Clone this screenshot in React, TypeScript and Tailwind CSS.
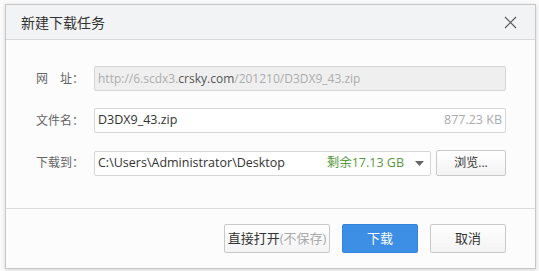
import React from 'react';

const font = { fontFamily: '"Segoe UI", "Open Sans", "Noto Sans CJK SC", sans-serif' };

const App: React.FC = () => {
  return (
    <div className="w-[539px] h-[271px] bg-[#fafafa] pt-[4px] pl-[5px]" style={font}>
      <div className="w-[531px] h-[265px] flex flex-col border border-[#c8c8c8] bg-[#fcfcfc] shadow-[0_1px_4px_rgba(0,0,0,0.15)]">
        {/* Header */}
        <div className="h-[35px] flex items-center justify-between pl-[15px] pr-[18px] bg-[#f2f3f5] border-b border-[#d9d9d9]">
          <span className="text-[14px] text-[#333]">新建下载任务</span>
          <svg width="13" height="13" viewBox="0 0 13 13" className="text-[#555]">
            <path d="M1 1 L12 12 M12 1 L1 12" stroke="currentColor" strokeWidth="1.1" fill="none" />
          </svg>
        </div>

        {/* Body */}
        <div className="h-[169px] flex flex-col gap-[17px] pt-[26px] pl-[30px] pr-[29px] border-b border-[#dcdcdc]">
          <div className="flex items-center">
            <span className="w-[58px] text-[12px] text-[#666] flex justify-between pr-[10px]">
              <span>网</span><span>址：</span>
            </span>
            <div className="flex-1 h-[25px] flex items-center px-[3px] rounded-[2px] border border-[#d6d6d6] bg-[#efefef] text-[12px] text-[#adadad]">
              http://6.scdx3.<span className="text-[#555]">crsky.com</span>/201210/D3DX9_43.zip
            </div>
          </div>
          <div className="flex items-center">
            <span className="w-[58px] text-[12px] text-[#666]">文件名：</span>
            <div className="flex-1 h-[25px] flex items-center justify-between pl-[3px] pr-[3px] rounded-[2px] border border-[#d6d6d6] bg-white text-[12.5px]">
              <span className="text-[#333]">D3DX9_43.zip</span>
              <span className="text-[#aaa]">877.23 KB</span>
            </div>
          </div>
          <div className="flex items-center">
            <span className="w-[58px] text-[12px] text-[#666]">下载到：</span>
            <div className="flex-1 h-[25px] flex items-center pl-[3px] pr-[6px] rounded-[2px] border border-[#d6d6d6] bg-white text-[12.5px]">
              <span className="flex-1 text-[#333]">C:\Users\Administrator\Desktop</span>
              <span className="text-[#58993f]">剩余17.13 GB</span>
              <svg width="9" height="5" viewBox="0 0 9 5" className="ml-[11px] text-[#666]">
                <path d="M0 0 L9 0 L4.5 5 Z" fill="currentColor" />
              </svg>
            </div>
            <button className="ml-[5px] w-[70px] h-[26px] rounded-[2px] border border-[#c9c9c9] bg-gradient-to-b from-white to-[#f3f3f3] text-[12px] text-[#333]">
              浏览...
            </button>
          </div>
        </div>

        {/* Footer */}
        <div className="flex-1 flex items-start justify-end gap-[12px] pt-[15px] pr-[29px]">
          <button className="w-[106px] h-[29px] rounded-[2px] border border-[#c9c9c9] bg-gradient-to-b from-white to-[#f3f3f3] text-[13px] text-[#333]">
            直接打开<span className="text-[#aaa]">(不保存)</span>
          </button>
          <button className="w-[76px] h-[29px] rounded-[2px] border border-[#3584dc] bg-[#3d8fe6] text-[13px] text-white">
            下载
          </button>
          <button className="w-[76px] h-[29px] rounded-[2px] border border-[#c9c9c9] bg-gradient-to-b from-white to-[#f3f3f3] text-[13px] text-[#333]">
            取消
          </button>
        </div>
      </div>
    </div>
  );
};

export default App;
